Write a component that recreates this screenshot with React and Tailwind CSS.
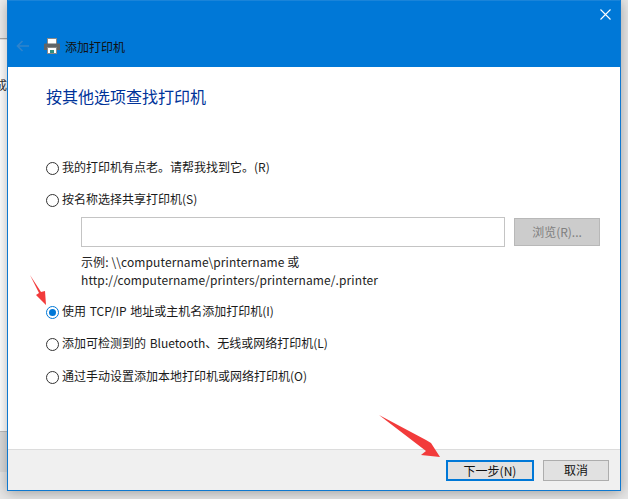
const Radio = ({ checked }) => (
  <span className={`mt-[3px] flex h-[13px] w-[13px] shrink-0 items-center justify-center rounded-full border bg-white ${checked ? "border-[#0078d7]" : "border-[#333333]"}`}>
    {checked && <span className="h-[7px] w-[7px] rounded-full bg-[#0078d7]" />}
  </span>
);

const Option = ({ checked, children, className = "" }) => (
  <div className={`flex h-4 items-center gap-[3px] [word-spacing:1px] ${className}`}>
    <Radio checked={checked} />
    <span>{children}</span>
  </div>
);

const PrinterIcon = () => (
  <svg width="16" height="16" viewBox="0 0 16 16">
    <rect x="3.5" y="0.5" width="9" height="6" fill="#fff" stroke="#888" />
    <path d="M1 5.5h14a1 1 0 0 1 1 1v5.5h-3v-2H3v2H0V6.500a1 1 0 0 1 1-1z" fill="#5f6468" />
    <rect x="3.500" y="9.500" width="9" height="6" fill="#fff" stroke="#888" />
    <rect x="6" y="12" width="4" height="3" fill="#2f8f7f" />
  </svg>
);

export default function App() {
  return (
    <div className="relative h-[499px] w-[628px] overflow-hidden bg-[#e6e6e6] text-[12px] text-[#1a1a1a]" style={{ fontFamily: '"Noto Sans CJK SC", "Liberation Sans", sans-serif' }}>
      <div className="absolute left-0 top-0 h-[39px] w-[7px] border-b border-[#a8a8a8] bg-[#ececec]" />
      <div className="absolute left-0 top-[40px] h-[391px] w-[7px] overflow-hidden bg-white">
        <span className="absolute left-[-5px] top-[37px] text-[12px] leading-4 text-[#333]">成</span>
      </div>
      <div className="absolute left-0 top-[431px] h-[41px] w-[7px] border-t border-[#bdbdbd] bg-[#dadada]" />

      <div className="relative ml-[7px] flex h-[491px] w-[614px] flex-col border-x border-b border-[#0f78cf] bg-white shadow-[0_2px_12px_rgba(0,0,0,0.3)]">
        <header className="flex h-[67px] shrink-0 flex-col border-t border-[#1a84d9] bg-[#0078d7]">
          <div className="flex h-[35px] justify-end pr-[9px] pt-[8px]">
            <svg width="11" height="11" viewBox="0 0 11 11" stroke="#fff" strokeWidth="1.1"><path d="M0.5 0.5l10 10M10.5 0.5l-10 10" /></svg>
          </div>
          <div className="flex items-center pl-[8px]">
            <svg className="mt-[1px]" width="13" height="12" viewBox="0 0 13 12" fill="none" stroke="#2f84cc" strokeWidth="1.6"><path d="M13 6H1.500M6.500 1L1.500 6l5 5" /></svg>
            <span className="ml-[15px] flex"><PrinterIcon /></span>
            <span className="ml-[5px] mt-[3px] text-[12px] leading-4 text-[#111]">添加打印机</span>
          </div>
        </header>

        <main className="flex flex-1 flex-col pl-[38px]">
          <h1 className="mt-[19px] text-[16px] font-normal leading-5 text-[#003399]">按其他选项查找打印机</h1>
          <Option className="mt-[53px]">我的打印机有点老。请帮我找到它。(R)</Option>
          <Option className="mt-[16px]">按名称选择共享打印机(S)</Option>
          <div className="mt-[10px] flex items-center pl-[35px]">
            <div className="h-[30px] w-[424px] border border-[#c4c4c4] bg-white" />
            <button className="ml-[9px] h-[28px] w-[86px] border border-[#b8b8b8] bg-[#cccccc] text-[#808080]">浏览(R)...</button>
          </div>
          <p className="mt-[6px] pl-[35px] leading-[18px] tracking-[0.1px] text-[#222]">示例: \\computername\printername 或<br />http://computername/printers/printername/.printer</p>
          <Option checked className="mt-[14px]">使用 TCP/IP 地址或主机名添加打印机(I)</Option>
          <Option className="mt-[16px]">添加可检测到的 Bluetooth、无线或网络打印机(L)</Option>
          <Option className="mt-[17px]">通过手动设置添加本地打印机或网络打印机(O)</Option>
        </main>

        <footer className="flex h-[41px] shrink-0 items-center justify-end gap-[9px] border-t border-[#dcdcdc] bg-[#f0f0f0] pr-[11px]">
          <button className="h-[21px] w-[88px] border-2 border-[#0078d7] bg-[#e1e1e1] text-[12px] text-[#111]">下一步(N)</button>
          <button className="h-[21px] w-[66px] border border-[#adadad] bg-[#e1e1e1] text-[12px] text-[#111]">取消</button>
        </footer>
      </div>

      <svg className="absolute left-[28px] top-[273px]" width="20" height="34" viewBox="28 273 20 34">
        <path d="M30 275L41 292L45 291L46 305L36 295L39 293Z" fill="#f23b3b" />
      </svg>
      <svg className="absolute left-[376px] top-[413px]" width="66" height="46" viewBox="376 413 66 46">
        <path d="M379 415L426 440L431 443L440 457L421 455L426 451Z" fill="#f23b3b" />
      </svg>
    </div>
  );
}
